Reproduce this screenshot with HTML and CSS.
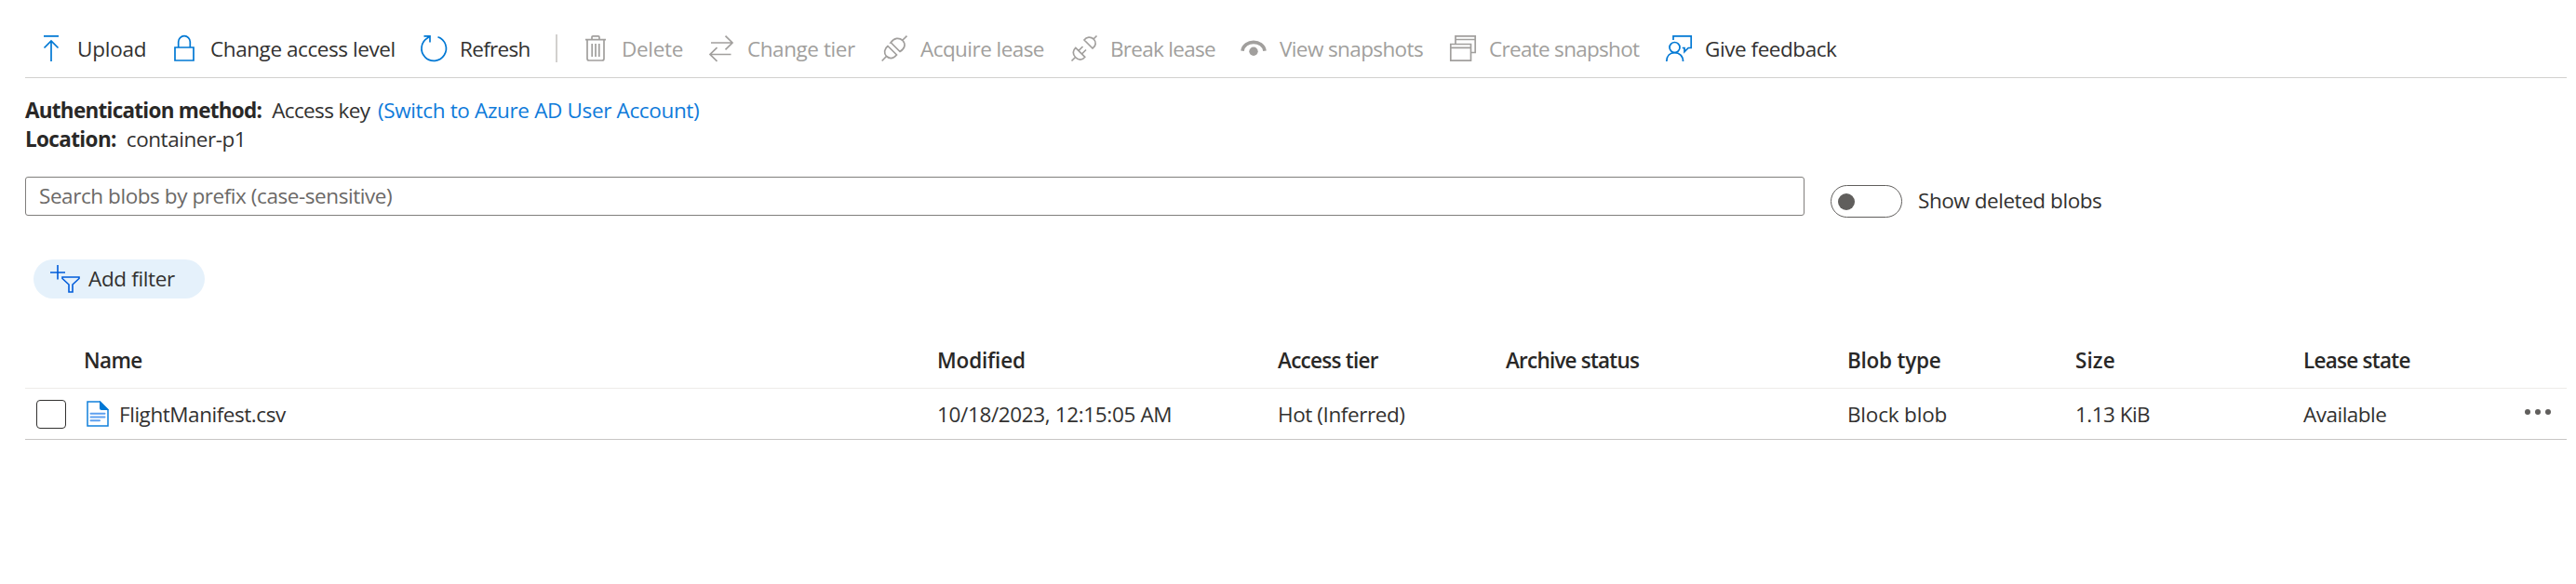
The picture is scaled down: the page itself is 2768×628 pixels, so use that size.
FILE: index.html
```
<!DOCTYPE html>
<html lang="en">
<head>
<meta charset="utf-8">
<title>container-p1</title>
<link rel="stylesheet" href="styles.css">
</head>
<body>
<nav class="toolbar">
  <button class="command"><svg class="icon" viewBox="0 0 28 28"><path d="M6 .9h16M14 28V6M6.5 13.500 14 6l7.500 7.500"/></svg><span class="t-upload">Upload</span></button>
  <button class="command"><svg class="icon" viewBox="0 0 28 28"><path d="M4 13h20v14H4zM7.700 13V7a6.300 6.300 0 0 1 12.600 0v6"/></svg><span class="t-access">Change access level</span></button>
  <button class="command"><svg class="icon" viewBox="0 0 28 28"><path d="M18.500 1.700A13.200 13.200 0 1 1 7.500 2.800L10 .9M3.500.9H10v6.500"/></svg><span class="t-refresh">Refresh</span></button>
  <i class="separator"></i>
  <button class="command disabled"><svg class="icon" viewBox="0 0 28 28"><path d="M3 4.700h22M10 4.500V2q0-1.200 1.200-1.200h5.600q1.200 0 1.200 1.200v2.500M5 5v20q0 2 2 2h14q2 0 2-2V5M10.200 9v14M14 9v14M17.800 9v14"/></svg><span class="t-delete">Delete</span></button>
  <button class="command disabled"><svg class="icon" viewBox="0 0 28 28"><path d="M3 8h23M18.500.7 26 8l-7.500 7.300M24.500 20.500H2M9.500 13.200 2 20.500l7.500 7.300"/></svg><span class="t-tier">Change tier</span></button>
  <button class="command disabled"><svg class="icon" viewBox="0 0 28 28"><path d="M.7 27.500 5.500 22.500M22.500 5.500 27.500.6M14.500 20.500M7 11.500c-4 3-4.500 7.500-1.500 11 3.500 3 7.500 2.500 11-1.500zM10.500 8 20 17.500c5.500-3.500 6.500-8 3-12-4-3.500-9-3-13 2.500z"/></svg><span class="t-acquire">Acquire lease</span></button>
  <button class="command disabled"><svg class="icon" viewBox="0 0 28 28"><path d="M.5 27.500 4.500 23.500M24 4 27.500.5M14 5l9 9c4-2.500 4-7 1.200-10C21 1.200 16.500 1.500 14 5zM4.800 13.300l10 10c-3 4-7 3.700-10.300.2-3-3.200-3-7.200.3-10.200zM8 16.500l4.500-4.500M11.500 20l4.500-4.500"/></svg><span class="t-break">Break lease</span></button>
  <button class="command disabled"><svg class="icon" viewBox="0 0 28 28"><circle class="solid" cx="14" cy="17.300" r="4.700"/><path class="brow" d="M2 16.700C3.500 4.200 24.500 4.200 26 16.700"/></svg><span class="t-view">View snapshots</span></button>
  <button class="command disabled"><svg class="icon" viewBox="0 0 28 28"><path d="M6 9V.8h21.200v17.700H23M6 4.500h21M.8 9.500H22.500v17.700H.8zM.8 13.300h21.500"/></svg><span class="t-create">Create snapshot</span></button>
  <button class="command"><svg class="icon" viewBox="0 0 28 28"><path d="M8 5V.8h19.200v12.700h-3L20 17.700v-4.200h-2.300"/><circle cx="9.500" cy="13" r="5.500"/><path d="M.8 28c0-6 3.700-9.400 8.700-9.400s9 3.400 9 9.400"/></svg><span class="t-feedback">Give feedback</span></button>
</nav>
<main>
  <section class="details">
    <div><b class="t-auth">Authentication method:</b><span class="t-key">Access key</span><a class="t-switch">(Switch to Azure AD User Account)</a></div>
    <div><b class="t-location">Location:</b><span class="t-container">container-p1</span></div>
  </section>
  <section class="search-row">
    <input class="search" type="text" placeholder="Search blobs by prefix (case-sensitive)">
    <div class="switch-field"><span class="switch"><i class="knob"></i></span><span class="t-show">Show deleted blobs</span></div>
  </section>
  <button class="filter"><svg class="filter-icon" viewBox="0 0 32 30"><path d="M0 8h16M8 0v15.500M13 13h18v1.500l-7 6.500V29h-4v-8l-7-6.500z"/></svg><span class="t-filter">Add filter</span></button>
  <section class="table">
    <div class="row head"><span></span><span class="t-name">Name</span><span class="t-modified">Modified</span><span class="t-atier">Access tier</span><span class="t-archive">Archive status</span><span class="t-type">Blob type</span><span class="t-size">Size</span><span class="t-lease">Lease state</span></div>
    <div class="row item"><i class="checkbox"></i><span class="file"><svg class="file-icon" viewBox="0 0 24 28"><path class="page" d="M1 1h13.500L23 9.500V27H1z"/><path class="fold" d="M14 0l10 10H16q-2 0-2-2z"/><path class="lines" d="M4.500 13.700h15M4.500 17.500h15M4.500 21.300h9.500"/></svg><span class="t-file">FlightManifest.csv</span></span><span class="t-date">10/18/2023, 12:15:05 AM</span><span class="t-hot">Hot (Inferred)</span><span></span><span class="t-block">Block blob</span><span class="t-bytes">1.13 KiB</span><span class="t-available">Available</span><svg class="more" viewBox="0 0 30 8"><circle cx="4" cy="4" r="3"/><circle cx="15" cy="4" r="3"/><circle cx="26" cy="4" r="3"/></svg></div>
  </section>
</main>
</body>
</html>
```
FILE: styles.css
```
* { box-sizing: border-box; }
body { margin: 0; background: #fff; color: #323130; font: 22.5px/31px "Open Sans", "Noto Sans", sans-serif; white-space: nowrap; }
button, input { font: inherit; color: inherit; border: 0; margin: 0; padding: 0; background: none; }
svg { display: block; flex: none; overflow: visible; }

.toolbar { display: grid; grid-template-columns: 143px 268px 145px 29px 135px 186px 204px 182px 225px 232px 1fr; align-items: center; height: 84px; margin: 0 10px 0 27px; padding: 20px 0 0 14px; border-bottom: 1px solid #d2d0ce; }
.command { display: flex; align-items: center; gap: 14px; height: 44px; text-align: left; white-space: nowrap; }
.command span { padding-top: 1px; }
.icon { width: 28px; height: 28px; fill: none; stroke: #0078d4; stroke-width: 1.7; }
.disabled { color: #a19f9d; }
.disabled .icon { stroke: #a19f9d; }
.icon .solid { fill: #a19f9d; stroke: none; }
.icon .brow { stroke-width: 3.6; }
.separator { width: 2px; height: 30px; background: #d2d0ce; }

main { padding: 19px 10px 0 27px; }
.details div { display: flex; }
.details b { color: #292827; font-weight: 700; }
.details b + span { margin-left: 11px; }
.details a { margin-left: 8.5px; color: #0f7bda; }

.search-row { display: flex; align-items: flex-start; margin-top: 25px; height: 44px; }
.search { width: 1912px; height: 42px; border: 1px solid #807e7c; border-radius: 3px; padding: 0 14px 1px; letter-spacing: -.43px; }
.search::placeholder { color: #6b6967; opacity: 1; }
.switch-field { display: flex; align-items: center; gap: 17px; margin: 9px 0 0 28px; }
.switch-field .t-show { padding-bottom: 2px; }
.switch { display: flex; align-items: center; width: 77px; height: 35px; padding-left: 7px; border: 1px solid #605e5c; border-radius: 18px; }
.knob { width: 18px; height: 18px; border-radius: 50%; background: #605e5c; }

.filter { display: flex; align-items: center; gap: 9px; width: 184px; height: 42px; margin: 45px 0 0 9px; padding: 0 0 1px 18px; border-radius: 21px; background: #e5f1fb; }
.filter-icon { width: 32px; height: 30px; fill: none; stroke: #015cda; stroke-width: 1.6; }

.table { margin-top: 36px; }
.row { display: grid; grid-template-columns: 63px 917px 366px 245px 367px 245px 245px 237px 1fr; align-items: center; }
.head { height: 61px; padding-top: 1px; border-bottom: 1px solid #edebe9; color: #292827; font-weight: 600; }
.item { height: 55px; border-bottom: 1px solid #c8c6c4; }
.checkbox { width: 32px; height: 31px; margin-left: 12px; border: 1.500px solid #323130; border-radius: 4px; }
.file { display: flex; align-items: center; gap: 11.5px; padding-left: 2.5px; }
.file-icon { width: 24px; height: 28px; }
.page { fill: #fff; stroke: #1080dc; stroke-width: 1.500; }
.fold { fill: #0078d4; }
.lines { stroke: #5ea0ef; stroke-width: 2; stroke-linecap: round; }
.more { width: 30px; height: 8px; margin-bottom: 5px; fill: #605e5c; }

/* Label tracking */
.t-upload { letter-spacing: -.24px; }
.t-access { letter-spacing: -.42px; }
.t-refresh { letter-spacing: -.69px; }
.t-delete { letter-spacing: -.32px; }
.t-tier { letter-spacing: -.43px; }
.t-acquire { letter-spacing: -.55px; }
.t-break { letter-spacing: -.71px; }
.t-view { letter-spacing: -.61px; }
.t-create { letter-spacing: -.7px; }
.t-feedback { letter-spacing: -.45px; }
.t-auth { letter-spacing: -.74px; }
.t-location { letter-spacing: -.64px; }
.t-key { letter-spacing: -.62px; }
.t-switch { letter-spacing: -.35px; }
.t-container { letter-spacing: -.45px; }
.t-show { letter-spacing: -.45px; }
.t-filter { letter-spacing: -.35px; }
.t-name { letter-spacing: -.6px; }
.t-modified { letter-spacing: -.16px; }
.t-atier { letter-spacing: -.74px; }
.t-archive { letter-spacing: -.79px; }
.t-type { letter-spacing: -.24px; }
.t-size { letter-spacing: .1px; }
.t-lease { letter-spacing: -.74px; }
.t-file { letter-spacing: -.45px; }
.t-date { letter-spacing: -.36px; }
.t-hot { letter-spacing: -.42px; }
.t-block { letter-spacing: -.18px; }
.t-bytes { letter-spacing: -.54px; }
.t-available { letter-spacing: -.5px; }
```
